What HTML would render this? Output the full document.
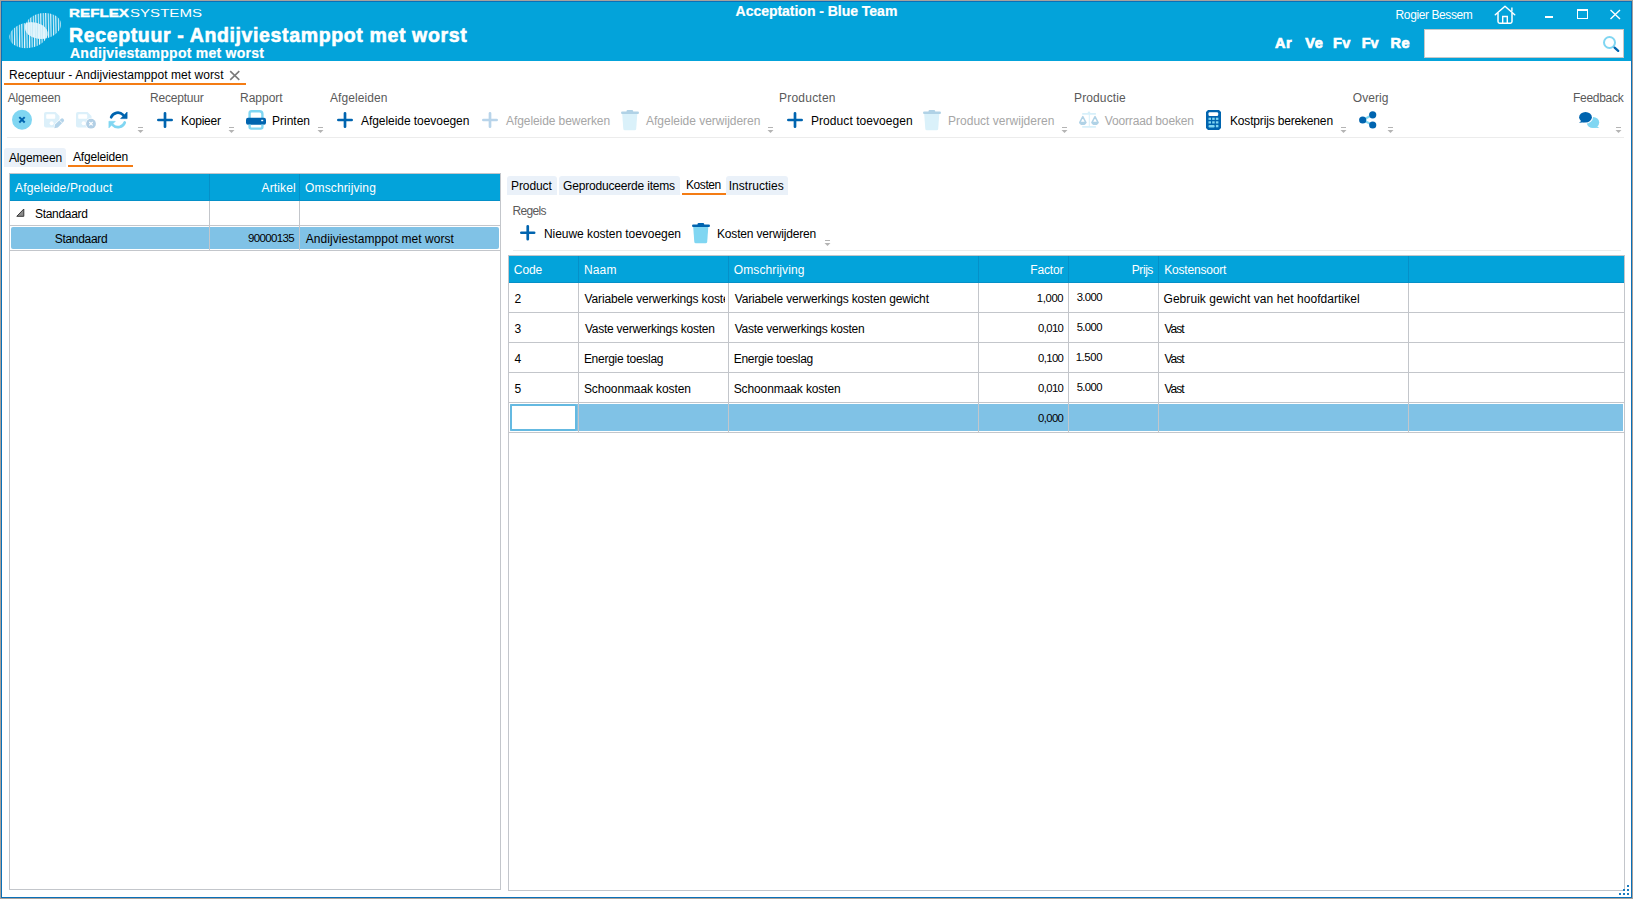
<!DOCTYPE html>
<html><head><meta charset="utf-8">
<style>
*{margin:0;padding:0;box-sizing:border-box}
html,body{width:1633px;height:899px;overflow:hidden;background:#a8a19c;font-family:"Liberation Sans",sans-serif;font-size:12px;color:#000;position:relative}
.a{position:absolute;white-space:nowrap;line-height:1}
svg{overflow:visible}
</style></head><body>
<div style="position:absolute;left:1px;top:1px;width:1631px;height:897px;background:#fff;border:1px solid #0a70b8;box-sizing:border-box"></div>
<div style="position:absolute;left:2px;top:2px;width:1629px;height:59px;background:#03a3da;"></div>
<svg style="position:absolute;left:5px;top:8px" width="60" height="46" viewBox="0 0 60 46">
<defs>
<pattern id="st" width="2.5" height="10" patternUnits="userSpaceOnUse" patternTransform="rotate(8)">
<rect x="0" y="0" width="1.15" height="10" fill="#fff"/></pattern>
<clipPath id="c1"><ellipse cx="23.5" cy="27.2" rx="19.2" ry="12.7" transform="rotate(-9 23.5 27.2)"/></clipPath>
</defs>
<ellipse cx="23.5" cy="27.2" rx="19.2" ry="12.7" transform="rotate(-9 23.5 27.2)" fill="url(#st)" opacity="0.9"/>
<ellipse cx="38" cy="17.9" rx="18.2" ry="12.8" transform="rotate(-9 38 17.9)" fill="url(#st)" opacity="0.9"/>
<g clip-path="url(#c1)"><ellipse cx="38" cy="17.9" rx="18.2" ry="12.8" transform="rotate(-9 38 17.9)" fill="#e4f5fc" opacity="0.75"/></g>
</svg>
<svg style="position:absolute;left:60px;top:4px" width="150" height="16" viewBox="0 0 150 16"><text x="9" y="12.9" font-family="Liberation Sans" font-weight="bold" font-size="10.6" fill="#fff" stroke="#fff" stroke-width="0.35" textLength="60" lengthAdjust="spacingAndGlyphs">REFLEX</text><text x="70" y="12.9" font-family="Liberation Sans" font-size="10.6" fill="#fff" textLength="72" lengthAdjust="spacingAndGlyphs">SYSTEMS</text></svg>
<div class="a " id="t1" style="top:26.49px;font-size:19.5px;color:#fff;font-weight:bold;letter-spacing:0.635px;-webkit-text-stroke:0.6px #fff;left:69.00px;">Receptuur - Andijviestamppot met worst</div>
<div class="a " id="t2" style="top:46.15px;font-size:14px;color:#fff;font-weight:bold;letter-spacing:0.260px;-webkit-text-stroke:0.2px #fff;left:70.00px;">Andijviestamppot met worst</div>
<div class="a " id="t3" style="top:4.15px;font-size:14px;color:#fff;font-weight:bold;letter-spacing:-0.027px;-webkit-text-stroke:0.2px #fff;left:735.60px;">Acceptation - Blue Team</div>
<div class="a " id="t4" style="top:8.84px;font-size:12px;color:#fff;letter-spacing:-0.400px;left:1395.60px;">Rogier Bessem</div>
<svg style="position:absolute;left:1493px;top:4px" width="24" height="22" viewBox="0 0 24 22"><path d="M2.3 10.8 L12 2.3 L21.7 10.8" fill="none" stroke="#fff" stroke-width="1.5" stroke-linecap="round" stroke-linejoin="round"/><path d="M5 9 V17.5 Q5 19.2 6.7 19.2 H17.3 Q19 19.2 19 17.5 V9" fill="none" stroke="#fff" stroke-width="1.5"/><path d="M9.7 19 V12.5 H14.3 V19" fill="none" stroke="#fff" stroke-width="1.4"/><path d="M18.9 3.4 V7.6" stroke="#fff" stroke-width="1.4"/></svg>
<div style="position:absolute;left:1545px;top:16px;width:8px;height:2px;background:#fff;"></div>
<div style="position:absolute;left:1577px;top:9px;width:11px;height:10px;background:transparent;border:1px solid #fff;border-top-width:2px;box-sizing:border-box"></div>
<svg style="position:absolute;left:1609px;top:9px" width="12" height="11" viewBox="0 0 12 11"><path d="M1.5 1 L11 10 M11 1 L1.5 10" stroke="#fff" stroke-width="1.4"/></svg>
<div class="a " id="t5" style="top:35.72px;font-size:14.5px;color:#fff;font-weight:bold;letter-spacing:0.600px;-webkit-text-stroke:0.7px #fff;left:1275.00px;">Ar</div>
<div class="a " id="t6" style="top:35.72px;font-size:14.5px;color:#fff;font-weight:bold;letter-spacing:0.800px;-webkit-text-stroke:0.7px #fff;left:1305.20px;">Ve</div>
<div class="a " id="t7" style="top:35.72px;font-size:14.5px;color:#fff;font-weight:bold;letter-spacing:0.400px;-webkit-text-stroke:0.7px #fff;left:1333.00px;">Fv</div>
<div class="a " id="t8" style="top:35.72px;font-size:14.5px;color:#fff;font-weight:bold;letter-spacing:-0.200px;-webkit-text-stroke:0.7px #fff;left:1361.80px;">Fv</div>
<div class="a " id="t9" style="top:35.72px;font-size:14.5px;color:#fff;font-weight:bold;letter-spacing:0.400px;-webkit-text-stroke:0.7px #fff;left:1390.60px;">Re</div>
<div style="position:absolute;left:1424px;top:29px;width:200px;height:29px;background:#fff;border:1px solid #c8c8c8;box-sizing:border-box"></div>
<svg style="position:absolute;left:1600px;top:33px" width="22" height="22" viewBox="0 0 22 22"><circle cx="9.5" cy="9.5" r="5.5" fill="none" stroke="#80d6f2" stroke-width="2"/><path d="M14.6 14.6 L18.2 17.9" stroke="#0064af" stroke-width="2.3" stroke-linecap="round"/></svg>
<div class="a " id="t10" style="top:68.84px;font-size:12px;color:#000;letter-spacing:0.065px;left:9.00px;">Receptuur - Andijviestamppot met worst</div>
<svg style="position:absolute;left:229px;top:70px" width="12" height="11" viewBox="0 0 12 11"><path d="M1.2 1.2 L10.3 9.8 M10.3 1.2 L1.2 9.8" stroke="#7a7a7a" stroke-width="1.6"/></svg>
<div style="position:absolute;left:4px;top:83px;width:242px;height:2px;background:#f47c14;"></div>
<div class="a " id="t11" style="top:91.84px;font-size:12px;color:#5a5a5a;letter-spacing:-0.157px;left:7.70px;">Algemeen</div>
<div class="a " id="t12" style="top:91.84px;font-size:12px;color:#5a5a5a;letter-spacing:-0.175px;left:149.90px;">Receptuur</div>
<div class="a " id="t13" style="top:91.84px;font-size:12px;color:#5a5a5a;left:240.00px;">Rapport</div>
<div class="a " id="t14" style="top:91.84px;font-size:12px;color:#5a5a5a;letter-spacing:0.078px;left:330.00px;">Afgeleiden</div>
<div class="a " id="t15" style="top:91.84px;font-size:12px;color:#5a5a5a;letter-spacing:0.225px;left:779.00px;">Producten</div>
<div class="a " id="t16" style="top:91.84px;font-size:12px;color:#5a5a5a;letter-spacing:0.125px;left:1074.00px;">Productie</div>
<div class="a " id="t17" style="top:91.84px;font-size:12px;color:#5a5a5a;letter-spacing:0.040px;left:1352.80px;">Overig</div>
<div class="a " id="t18" style="top:91.84px;font-size:12px;color:#5a5a5a;letter-spacing:-0.286px;left:1573.00px;">Feedback</div>
<div style="position:absolute;left:7px;top:137px;width:1617px;height:1px;background:#ececec;"></div>
<svg style="position:absolute;left:12px;top:110px" width="20" height="20" viewBox="0 0 20 20"><circle cx="10" cy="9.8" r="10" fill="#80d6f2"/><path d="M7.3 7.1 L12.7 12.5 M12.7 7.1 L7.3 12.5" stroke="#0064af" stroke-width="2"/></svg>
<svg style="position:absolute;left:43px;top:111px" width="22" height="19" viewBox="0 0 22 19"><path d="M1 3 Q1 1 3 1 H12.5 L16.5 5 V14.5 Q16.5 16.5 14.5 16.5 H3 Q1 16.5 1 14.5 Z" fill="#dcf0fa"/><rect x="3.2" y="3.3" width="9" height="4.4" rx="0.8" fill="#fff"/><circle cx="8.6" cy="12.2" r="2" fill="#fff"/><path d="M11.3 17.3 L12.0 13.6 L17.8 8.0 A1.9 1.9 0 0 1 20.5 10.7 L14.8 16.5 Z" fill="#b4d4ea" stroke="#fff" stroke-width="1.2" paint-order="stroke"/><path d="M16.6 9.3 L19.2 11.9" stroke="#fff" stroke-width="0.9"/></svg>
<svg style="position:absolute;left:75px;top:111px" width="22" height="19" viewBox="0 0 22 19"><path d="M1 3 Q1 1 3 1 H12.5 L16.5 5 V14.5 Q16.5 16.5 14.5 16.5 H3 Q1 16.5 1 14.5 Z" fill="#dcf0fa"/><rect x="3.2" y="3.3" width="9" height="4.4" rx="0.8" fill="#fff"/><circle cx="8.6" cy="12.2" r="2" fill="#fff"/><circle cx="16" cy="12.7" r="5.6" fill="#fff"/><circle cx="16" cy="12.7" r="4.9" fill="#b2cfe5"/><path d="M14.3 11 L17.7 14.4 M17.7 11 L14.3 14.4" stroke="#fff" stroke-width="1.2"/></svg>
<svg style="position:absolute;left:104px;top:106px" width="28" height="28" viewBox="0 0 28 28"><path d="M7.16 11.26 A7.2 7.2 0 0 1 19.09 8.91" fill="none" stroke="#0064af" stroke-width="2.7" stroke-linecap="round"/><path d="M16.6 12.6 L23.1 12.6 L23.1 6 Z" fill="#0064af" stroke="#0064af" stroke-width="0.6" stroke-linejoin="round"/><path d="M20.75 16.5 A7.2 7.2 0 0 1 8.91 19.09" fill="none" stroke="#80d6f2" stroke-width="2.7" stroke-linecap="round"/><path d="M4.9 15.3 L11.3 15.3 L4.9 21.9 Z" fill="#80d6f2" stroke="#80d6f2" stroke-width="0.6" stroke-linejoin="round"/></svg>
<svg style="position:absolute;left:137px;top:127px" width="8" height="7" viewBox="0 0 8 7"><rect x="1" y="0" width="5" height="1" fill="#b4b4b4"/><path d="M0.5 3 L6.5 3 L3.5 6 Z" fill="#b4b4b4"/></svg>
<svg style="position:absolute;left:157px;top:112px" width="16" height="16" viewBox="0 0 16 16"><path d="M8.0 1.35 V14.65 M1.35 8.0 H14.65" stroke="#0064af" stroke-width="2.7" stroke-linecap="round"/></svg>
<div class="a " id="t19" style="top:114.84px;font-size:12px;color:#000;letter-spacing:-0.250px;left:181.10px;">Kopieer</div>
<svg style="position:absolute;left:228px;top:127px" width="8" height="7" viewBox="0 0 8 7"><rect x="1" y="0" width="5" height="1" fill="#b4b4b4"/><path d="M0.5 3 L6.5 3 L3.5 6 Z" fill="#b4b4b4"/></svg>
<svg style="position:absolute;left:245px;top:109px" width="22" height="22" viewBox="0 0 22 22"><path d="M4.6 9 V4 Q4.6 2.2 6.5 2.2 H14.5 Q17.4 2.2 17.4 5 V9" fill="none" stroke="#80d6f2" stroke-width="2.4"/><rect x="1" y="8.8" width="20" height="7" rx="2" fill="#0064af"/><rect x="16.2" y="10.8" width="2" height="1.4" fill="#fff"/><path d="M4.6 15.5 V18 Q4.6 19.6 6.3 19.6 H15.7 Q17.4 19.6 17.4 18 V15.5" fill="none" stroke="#80d6f2" stroke-width="2.4"/></svg>
<div class="a " id="t20" style="top:114.84px;font-size:12px;color:#000;letter-spacing:-0.017px;left:272.10px;">Printen</div>
<svg style="position:absolute;left:317px;top:127px" width="8" height="7" viewBox="0 0 8 7"><rect x="1" y="0" width="5" height="1" fill="#b4b4b4"/><path d="M0.5 3 L6.5 3 L3.5 6 Z" fill="#b4b4b4"/></svg>
<svg style="position:absolute;left:337px;top:112px" width="16" height="16" viewBox="0 0 16 16"><path d="M8.0 1.35 V14.65 M1.35 8.0 H14.65" stroke="#0064af" stroke-width="2.7" stroke-linecap="round"/></svg>
<div class="a " id="t21" style="top:114.84px;font-size:12px;color:#000;letter-spacing:-0.056px;left:361.00px;">Afgeleide toevoegen</div>
<svg style="position:absolute;left:482px;top:112px" width="16" height="16" viewBox="0 0 16 16"><path d="M8.0 1.35 V14.65 M1.35 8.0 H14.65" stroke="#b8d4ea" stroke-width="2.7" stroke-linecap="round"/></svg>
<div class="a " id="t22" style="top:114.84px;font-size:12px;color:#a6a6a6;letter-spacing:-0.076px;left:506.00px;">Afgeleide bewerken</div>
<svg style="position:absolute;left:621px;top:109.5px" width="18" height="21" viewBox="0 0 18 21"><rect x="0" y="1.5" width="18" height="2.6" rx="1.3" fill="#b0d2e6"/><rect x="5.5" y="0" width="6.7" height="2.6" rx="1.2" fill="#b0d2e6"/><path d="M1.2 4 H16.3 L15.2 19 Q15 20.3 13.6 20.3 H3.8 Q2.4 20.3 2.3 19 Z" fill="#daf1fa"/></svg>
<div class="a " id="t23" style="top:114.84px;font-size:12px;color:#a6a6a6;letter-spacing:-0.015px;left:646.00px;">Afgeleide verwijderen</div>
<svg style="position:absolute;left:767px;top:127px" width="8" height="7" viewBox="0 0 8 7"><rect x="1" y="0" width="5" height="1" fill="#b4b4b4"/><path d="M0.5 3 L6.5 3 L3.5 6 Z" fill="#b4b4b4"/></svg>
<svg style="position:absolute;left:787px;top:112px" width="16" height="16" viewBox="0 0 16 16"><path d="M8.0 1.35 V14.65 M1.35 8.0 H14.65" stroke="#0064af" stroke-width="2.7" stroke-linecap="round"/></svg>
<div class="a " id="t24" style="top:114.84px;font-size:12px;color:#000;letter-spacing:0.062px;left:811.00px;">Product toevoegen</div>
<svg style="position:absolute;left:922.5px;top:109.5px" width="18" height="21" viewBox="0 0 18 21"><rect x="0" y="1.5" width="18" height="2.6" rx="1.3" fill="#b0d2e6"/><rect x="5.5" y="0" width="6.7" height="2.6" rx="1.2" fill="#b0d2e6"/><path d="M1.2 4 H16.3 L15.2 19 Q15 20.3 13.6 20.3 H3.8 Q2.4 20.3 2.3 19 Z" fill="#daf1fa"/></svg>
<div class="a " id="t25" style="top:114.84px;font-size:12px;color:#a6a6a6;letter-spacing:0.017px;left:948.00px;">Product verwijderen</div>
<svg style="position:absolute;left:1061px;top:127px" width="8" height="7" viewBox="0 0 8 7"><rect x="1" y="0" width="5" height="1" fill="#b4b4b4"/><path d="M0.5 3 L6.5 3 L3.5 6 Z" fill="#b4b4b4"/></svg>
<svg style="position:absolute;left:1078px;top:110px" width="22" height="20" viewBox="0 0 22 20"><path d="M4.2 3.9 H17.9 M4.2 16.9 H17.9" stroke="#d7f0fa" stroke-width="1.6"/><path d="M10.8 2 H11.8 V16 H10.8 Z" fill="#d7f0fa"/><circle cx="11" cy="2.6" r="1.2" fill="#d7f0fa"/><path d="M4.8 6.6 L1.8 12.4 H7.8 Z M17 6.6 L14 12.4 H20 Z" fill="none" stroke="#b0d2e6" stroke-width="1.5" stroke-linejoin="round"/><path d="M1.2 12.2 Q1.2 15 4.8 15 Q8.4 15 8.4 12.2 Z M13.4 12.2 Q13.4 15 17 15 Q20.6 15 20.6 12.2 Z" fill="#b0d2e6"/></svg>
<div class="a " id="t26" style="top:114.84px;font-size:12px;color:#a6a6a6;letter-spacing:-0.164px;left:1104.80px;">Voorraad boeken</div>
<svg style="position:absolute;left:1205px;top:109px" width="18" height="22" viewBox="0 0 18 22"><path d="M1 3 L3 1 H14 L16 3 V19 L14 21 H3 L1 19 Z" fill="#0064af"/><rect x="3.5" y="3.3" width="9.7" height="3.7" rx="1.2" fill="#fff"/><rect x="3.5" y="8.7" width="2.5" height="2.2" fill="#80d6f2"/><rect x="7.2" y="8.7" width="2.5" height="2.2" fill="#80d6f2"/><rect x="10.9" y="8.7" width="2.5" height="2.2" fill="#80d6f2"/><rect x="3.5" y="12.3" width="2.5" height="2.2" fill="#80d6f2"/><rect x="7.2" y="12.3" width="2.5" height="2.2" fill="#80d6f2"/><rect x="10.9" y="12.3" width="2.5" height="2.2" fill="#80d6f2"/><rect x="3.5" y="15.9" width="6.2" height="2.6" rx="1" fill="#80d6f2"/><rect x="10.9" y="15.9" width="2.5" height="2.4" fill="#80d6f2"/></svg>
<div class="a " id="t27" style="top:114.84px;font-size:12px;color:#000;letter-spacing:-0.167px;left:1230.00px;">Kostprijs berekenen</div>
<svg style="position:absolute;left:1340px;top:127px" width="8" height="7" viewBox="0 0 8 7"><rect x="1" y="0" width="5" height="1" fill="#b4b4b4"/><path d="M0.5 3 L6.5 3 L3.5 6 Z" fill="#b4b4b4"/></svg>
<svg style="position:absolute;left:1356px;top:108px" width="22" height="22" viewBox="0 0 22 22"><path d="M6.7 12 L16.7 6.85 M6.7 12 L16.7 17" stroke="#80d6f2" stroke-width="2.2"/><circle cx="6.7" cy="12" r="3.6" fill="#0064af"/><circle cx="16.7" cy="6.85" r="3.6" fill="#0064af"/><circle cx="16.7" cy="17" r="3.6" fill="#0064af"/></svg>
<svg style="position:absolute;left:1387px;top:127px" width="8" height="7" viewBox="0 0 8 7"><rect x="1" y="0" width="5" height="1" fill="#b4b4b4"/><path d="M0.5 3 L6.5 3 L3.5 6 Z" fill="#b4b4b4"/></svg>
<svg style="position:absolute;left:1576px;top:109px" width="26" height="22" viewBox="0 0 26 22"><ellipse cx="17" cy="13.5" rx="6.2" ry="5.5" fill="#80d6f2"/><path d="M20 16.5 L23.3 19 L17.5 18.7 Z" fill="#80d6f2"/><ellipse cx="9.5" cy="8.2" rx="7.5" ry="6.4" fill="#fff"/><ellipse cx="9.5" cy="8.2" rx="6.4" ry="5.3" fill="#0064af"/><path d="M5.5 11.8 L3 13.8 L9 13.2 Z" fill="#0064af"/></svg>
<svg style="position:absolute;left:1615px;top:127px" width="8" height="7" viewBox="0 0 8 7"><rect x="1" y="0" width="5" height="1" fill="#b4b4b4"/><path d="M0.5 3 L6.5 3 L3.5 6 Z" fill="#b4b4b4"/></svg>
<div style="position:absolute;left:4px;top:148px;width:62px;height:19px;background:#eaf1f9;border-radius:3px 3px 0 0"></div>
<div class="a " id="t28" style="top:151.84px;font-size:12px;color:#000;letter-spacing:-0.114px;left:8.90px;">Algemeen</div>
<div class="a " id="t29" style="top:150.84px;font-size:12px;color:#000;letter-spacing:-0.167px;left:73.00px;">Afgeleiden</div>
<div style="position:absolute;left:68px;top:165px;width:65px;height:2px;background:#f47c14;"></div>
<div style="position:absolute;left:9px;top:173px;width:492px;height:717px;background:#fff;border:1px solid #c3c6cb;box-sizing:border-box"></div>
<div style="position:absolute;left:10px;top:174px;width:490px;height:26px;background:#03a3da;"></div>
<div style="position:absolute;left:10px;top:200px;width:490px;height:1px;background:#0590c8;"></div>
<div style="position:absolute;left:209px;top:174px;width:1px;height:27px;background:#0590c8;"></div>
<div style="position:absolute;left:299px;top:174px;width:1px;height:27px;background:#0590c8;"></div>
<div style="position:absolute;left:209px;top:201px;width:1px;height:49px;background:#c3c6cb;"></div>
<div style="position:absolute;left:299px;top:201px;width:1px;height:49px;background:#c3c6cb;"></div>
<div class="a " id="t30" style="top:181.84px;font-size:12px;color:#fff;letter-spacing:0.156px;left:15.00px;">Afgeleide/Product</div>
<div class="a " id="t31" style="top:181.84px;font-size:12px;color:#fff;letter-spacing:0.133px;right:1337.20px;">Artikel</div>
<div class="a " id="t32" style="top:181.84px;font-size:12px;color:#fff;letter-spacing:0.127px;left:305.10px;">Omschrijving</div>
<div style="position:absolute;left:10px;top:225px;width:490px;height:1px;background:#c3c6cb;"></div>
<svg style="position:absolute;left:16px;top:208px" width="9" height="10" viewBox="0 0 9 10"><path d="M7.8 1 V8.3 H0.8 Z" fill="#8a8a8a" stroke="#3a3a3a" stroke-width="1" stroke-linejoin="round"/></svg>
<div class="a " id="t33" style="top:207.84px;font-size:12px;color:#000;letter-spacing:-0.312px;left:35.00px;">Standaard</div>
<div style="position:absolute;left:11px;top:227px;width:488px;height:22px;background:#80c2e6;border-radius:2px"></div>
<div style="position:absolute;left:209px;top:227px;width:1px;height:22px;background:#c3c6cb;"></div>
<div style="position:absolute;left:299px;top:227px;width:1px;height:22px;background:#c3c6cb;"></div>
<div style="position:absolute;left:10px;top:250px;width:490px;height:1px;background:#c3c6cb;"></div>
<div class="a " id="t34" style="top:232.84px;font-size:12px;color:#000;letter-spacing:-0.312px;left:54.80px;">Standaard</div>
<div class="a " id="t35" style="top:233.26px;font-size:11.5px;color:#000;letter-spacing:-0.629px;right:1338.90px;">90000135</div>
<div class="a " id="t36" style="top:232.84px;font-size:12px;color:#000;letter-spacing:0.056px;left:305.80px;">Andijviestamppot met worst</div>
<div style="position:absolute;left:507px;top:176px;width:50px;height:19px;background:#eaf1f9;border-radius:3px 3px 0 0"></div>
<div style="position:absolute;left:559px;top:176px;width:121px;height:19px;background:#eaf1f9;border-radius:3px 3px 0 0"></div>
<div style="position:absolute;left:726px;top:176px;width:62px;height:19px;background:#eaf1f9;border-radius:3px 3px 0 0"></div>
<div class="a " id="t37" style="top:179.84px;font-size:12px;color:#000;letter-spacing:-0.083px;left:511.00px;">Product</div>
<div class="a " id="t38" style="top:179.84px;font-size:12px;color:#000;letter-spacing:-0.183px;left:563.00px;">Geproduceerde items</div>
<div class="a " id="t39" style="top:178.84px;font-size:12px;color:#000;letter-spacing:-0.420px;left:686.00px;">Kosten</div>
<div class="a " id="t40" style="top:179.84px;font-size:12px;color:#000;letter-spacing:0.030px;left:728.70px;">Instructies</div>
<div style="position:absolute;left:682px;top:193px;width:44px;height:2px;background:#f47c14;"></div>
<div class="a " id="t41" style="top:204.84px;font-size:12px;color:#5a5a5a;letter-spacing:-0.660px;left:512.50px;">Regels</div>
<svg style="position:absolute;left:520px;top:225px" width="15.5" height="15.5" viewBox="0 0 15.5 15.5"><path d="M7.75 1.35 V14.15 M1.35 7.75 H14.15" stroke="#0064af" stroke-width="2.7" stroke-linecap="round"/></svg>
<div class="a " id="t42" style="top:227.84px;font-size:12px;color:#000;letter-spacing:-0.045px;left:543.90px;">Nieuwe kosten toevoegen</div>
<svg style="position:absolute;left:692px;top:222.5px" width="18" height="21" viewBox="0 0 18 21"><rect x="0" y="1.5" width="18" height="2.6" rx="1.3" fill="#0064af"/><rect x="5.5" y="0" width="6.7" height="2.6" rx="1.2" fill="#0064af"/><path d="M1.2 4 H16.3 L15.2 19 Q15 20.3 13.6 20.3 H3.8 Q2.4 20.3 2.3 19 Z" fill="#80d6f2"/></svg>
<div class="a " id="t43" style="top:227.84px;font-size:12px;color:#000;letter-spacing:-0.171px;left:717.00px;">Kosten verwijderen</div>
<svg style="position:absolute;left:824px;top:240px" width="8" height="7" viewBox="0 0 8 7"><rect x="1" y="0" width="5" height="1" fill="#b4b4b4"/><path d="M0.5 3 L6.5 3 L3.5 6 Z" fill="#b4b4b4"/></svg>
<div style="position:absolute;left:513px;top:250px;width:1108px;height:1px;background:#ececec;"></div>
<div style="position:absolute;left:508px;top:255px;width:1117px;height:636px;background:#fff;border:1px solid #c3c6cb;box-sizing:border-box"></div>
<div style="position:absolute;left:509px;top:256px;width:1115px;height:26px;background:#03a3da;"></div>
<div style="position:absolute;left:509px;top:282px;width:1115px;height:1px;background:#0590c8;"></div>
<div style="position:absolute;left:578px;top:256px;width:1px;height:27px;background:#0590c8;"></div>
<div style="position:absolute;left:578px;top:283px;width:1px;height:149px;background:#c3c6cb;"></div>
<div style="position:absolute;left:728px;top:256px;width:1px;height:27px;background:#0590c8;"></div>
<div style="position:absolute;left:728px;top:283px;width:1px;height:149px;background:#c3c6cb;"></div>
<div style="position:absolute;left:978px;top:256px;width:1px;height:27px;background:#0590c8;"></div>
<div style="position:absolute;left:978px;top:283px;width:1px;height:149px;background:#c3c6cb;"></div>
<div style="position:absolute;left:1068px;top:256px;width:1px;height:27px;background:#0590c8;"></div>
<div style="position:absolute;left:1068px;top:283px;width:1px;height:149px;background:#c3c6cb;"></div>
<div style="position:absolute;left:1158px;top:256px;width:1px;height:27px;background:#0590c8;"></div>
<div style="position:absolute;left:1158px;top:283px;width:1px;height:149px;background:#c3c6cb;"></div>
<div style="position:absolute;left:1408px;top:256px;width:1px;height:27px;background:#0590c8;"></div>
<div style="position:absolute;left:1408px;top:283px;width:1px;height:149px;background:#c3c6cb;"></div>
<div class="a " id="t44" style="top:263.84px;font-size:12px;color:#fff;letter-spacing:-0.067px;left:513.80px;">Code</div>
<div class="a " id="t45" style="top:263.84px;font-size:12px;color:#fff;letter-spacing:0.167px;left:583.90px;">Naam</div>
<div class="a " id="t46" style="top:263.84px;font-size:12px;color:#fff;letter-spacing:0.136px;left:733.70px;">Omschrijving</div>
<div class="a " id="t47" style="top:263.84px;font-size:12px;color:#fff;letter-spacing:-0.160px;right:569.60px;">Factor</div>
<div class="a " id="t48" style="top:263.84px;font-size:12px;color:#fff;letter-spacing:-0.450px;right:480.10px;">Prijs</div>
<div class="a " id="t49" style="top:263.84px;font-size:12px;color:#fff;letter-spacing:-0.190px;left:1164.20px;">Kostensoort</div>
<div style="position:absolute;left:509px;top:312px;width:1115px;height:1px;background:#c3c6cb;"></div>
<div class="a " style="top:292.84px;font-size:12px;color:#000;left:514.50px;">2</div>
<div style="position:absolute;left:580px;top:283px;width:145px;height:29px;overflow:hidden"><div class="a" style="left:4.6px;top:9.84px;font-size:12px;letter-spacing:-0.16px">Variabele verwerkings kosten</div></div>
<div class="a " id="t50" style="top:292.84px;font-size:12px;color:#000;letter-spacing:-0.160px;left:734.70px;">Variabele verwerkings kosten gewicht</div>
<div class="a " id="t51" style="top:293.43px;font-size:11.3px;color:#000;letter-spacing:-0.375px;right:569.80px;">1,000</div>
<div class="a " id="t52" style="top:292.43px;font-size:11.3px;color:#000;letter-spacing:-0.625px;left:1076.70px;">3.000</div>
<div class="a " id="t53" style="top:292.84px;font-size:12px;color:#000;letter-spacing:0.057px;left:1163.50px;">Gebruik gewicht van het hoofdartikel</div>
<div style="position:absolute;left:509px;top:342px;width:1115px;height:1px;background:#c3c6cb;"></div>
<div class="a " style="top:322.84px;font-size:12px;color:#000;left:514.50px;">3</div>
<div class="a " id="t54" style="top:322.84px;font-size:12px;color:#000;letter-spacing:-0.257px;left:584.90px;">Vaste verwerkings kosten</div>
<div class="a " id="t55" style="top:322.84px;font-size:12px;color:#000;letter-spacing:-0.257px;left:734.70px;">Vaste verwerkings kosten</div>
<div class="a " id="t56" style="top:323.43px;font-size:11.3px;color:#000;letter-spacing:-0.625px;right:569.80px;">0,010</div>
<div class="a " id="t57" style="top:322.43px;font-size:11.3px;color:#000;letter-spacing:-0.625px;left:1076.70px;">5.000</div>
<div class="a " id="t58" style="top:322.84px;font-size:12px;color:#000;letter-spacing:-1.000px;left:1164.50px;">Vast</div>
<div style="position:absolute;left:509px;top:372px;width:1115px;height:1px;background:#c3c6cb;"></div>
<div class="a " style="top:352.84px;font-size:12px;color:#000;left:514.50px;">4</div>
<div class="a " id="t59" style="top:352.84px;font-size:12px;color:#000;letter-spacing:-0.271px;left:583.90px;">Energie toeslag</div>
<div class="a " id="t60" style="top:352.84px;font-size:12px;color:#000;letter-spacing:-0.271px;left:733.70px;">Energie toeslag</div>
<div class="a " id="t61" style="top:353.43px;font-size:11.3px;color:#000;letter-spacing:-0.625px;right:569.80px;">0,100</div>
<div class="a " id="t62" style="top:352.43px;font-size:11.3px;color:#000;letter-spacing:-0.375px;left:1075.70px;">1.500</div>
<div class="a " id="t63" style="top:352.84px;font-size:12px;color:#000;letter-spacing:-1.000px;left:1164.50px;">Vast</div>
<div style="position:absolute;left:509px;top:402px;width:1115px;height:1px;background:#c3c6cb;"></div>
<div class="a " style="top:382.84px;font-size:12px;color:#000;left:514.50px;">5</div>
<div class="a " id="t64" style="top:382.84px;font-size:12px;color:#000;letter-spacing:-0.106px;left:583.90px;">Schoonmaak kosten</div>
<div class="a " id="t65" style="top:382.84px;font-size:12px;color:#000;letter-spacing:-0.106px;left:733.70px;">Schoonmaak kosten</div>
<div class="a " id="t66" style="top:383.43px;font-size:11.3px;color:#000;letter-spacing:-0.625px;right:569.80px;">0,010</div>
<div class="a " id="t67" style="top:382.43px;font-size:11.3px;color:#000;letter-spacing:-0.625px;left:1076.70px;">5.000</div>
<div class="a " id="t68" style="top:382.84px;font-size:12px;color:#000;letter-spacing:-1.000px;left:1164.50px;">Vast</div>
<div style="position:absolute;left:510px;top:404px;width:1113px;height:27px;background:#80c2e6;"></div>
<div style="position:absolute;left:578px;top:403px;width:1px;height:29px;background:#c3c6cb;"></div>
<div style="position:absolute;left:728px;top:403px;width:1px;height:29px;background:#c3c6cb;"></div>
<div style="position:absolute;left:978px;top:403px;width:1px;height:29px;background:#c3c6cb;"></div>
<div style="position:absolute;left:1068px;top:403px;width:1px;height:29px;background:#c3c6cb;"></div>
<div style="position:absolute;left:1158px;top:403px;width:1px;height:29px;background:#c3c6cb;"></div>
<div style="position:absolute;left:1408px;top:403px;width:1px;height:29px;background:#c3c6cb;"></div>
<div style="position:absolute;left:509px;top:432px;width:1115px;height:1px;background:#c3c6cb;"></div>
<div style="position:absolute;left:510px;top:404px;width:67px;height:27px;background:#fff;border:2px solid #64b9e1;border-radius:2px;box-sizing:border-box"></div>
<div class="a " id="t69" style="top:413.43px;font-size:11.3px;color:#000;letter-spacing:-0.625px;right:569.80px;">0,000</div>
<div style="position:absolute;left:1627px;top:885px;width:2px;height:2px;background:#1a7cc0;"></div>
<div style="position:absolute;left:1623px;top:889px;width:2px;height:2px;background:#1a7cc0;"></div>
<div style="position:absolute;left:1627px;top:889px;width:2px;height:2px;background:#1a7cc0;"></div>
<div style="position:absolute;left:1619px;top:893px;width:2px;height:2px;background:#1a7cc0;"></div>
<div style="position:absolute;left:1623px;top:893px;width:2px;height:2px;background:#1a7cc0;"></div>
<div style="position:absolute;left:1627px;top:893px;width:2px;height:2px;background:#1a7cc0;"></div>
</body></html>
